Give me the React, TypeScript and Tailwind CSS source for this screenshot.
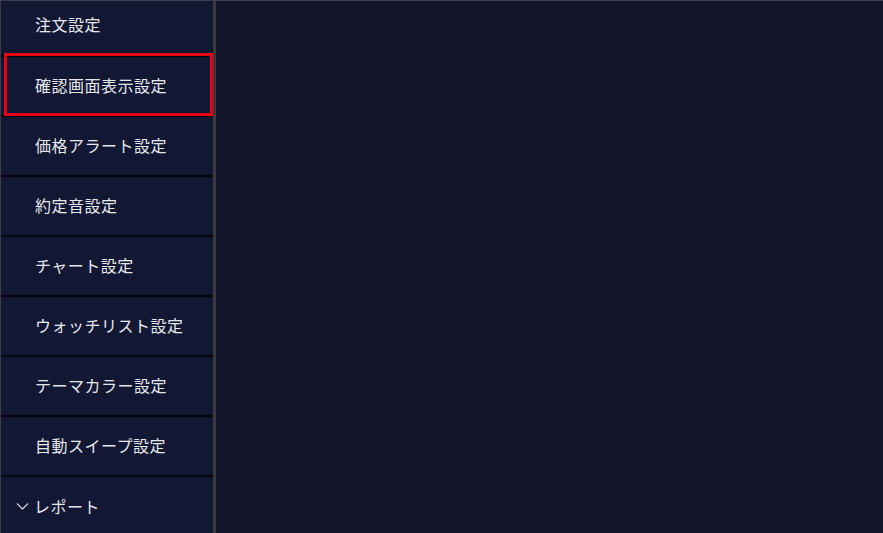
import { FC } from "react";

const items = [
    "注文設定",
    "確認画面表示設定",
    "価格アラート設定",
    "約定音設定",
    "チャート設定",
    "ウォッチリスト設定",
    "テーマカラー設定",
    "自動スイープ設定",
];

const Row: FC<{ label: string; first?: boolean; focused?: boolean }> = (props) => {
    return (
        <div
            className={
                props.first
                    ? "relative h-[56px] shrink-0 flex items-center pb-[8px] pl-[34px] border-b-2 border-[#05060d]"
                    : "relative h-[60px] shrink-0 flex items-center pb-[2px] pl-[34px] border-b-2 border-[#05060d]"
            }
        >
            <span className="text-[16px] tracking-[0.5px] text-[#e6e7ec]">{props.label}</span>
            {props.focused && (
                <div className="absolute -top-[4px] left-[3px] right-0 -bottom-[1px] border-[3px] border-[#e60012]" />
            )}
        </div>
    );
};

const Sidebar: FC = () => {
    return (
        <nav className="w-[216px] shrink-0 flex flex-col bg-[#121733] border-l border-[#3b3d4e] border-r-[3px] border-r-[#3a3a3c] overflow-hidden">
            {items.map((label, i) => (
                <Row key={label} label={label} first={i === 0} focused={i === 1} />
            ))}
            <div className="h-[60px] shrink-0 flex items-center pb-[2px] pl-[15px] gap-[5px]">
                <svg width="13" height="8" viewBox="0 0 13 8" fill="none">
                    <path d="M1 1.5 L6.5 7 L12 1.5" stroke="#c7c9d3" strokeWidth="1.3" />
                </svg>
                <span className="text-[16px] tracking-[0.5px] text-[#e6e7ec]">レポート</span>
            </div>
        </nav>
    );
};

export default function App() {
    return (
        <div
            className="w-[883px] h-[533px] flex border-t border-[#3b3d4e] bg-[#121529] overflow-hidden"
            style={{ fontFamily: '"Noto Sans CJK JP", "Noto Sans", sans-serif' }}
        >
            <Sidebar />
            <main className="flex-1 bg-[#121529]" />
        </div>
    );
}
